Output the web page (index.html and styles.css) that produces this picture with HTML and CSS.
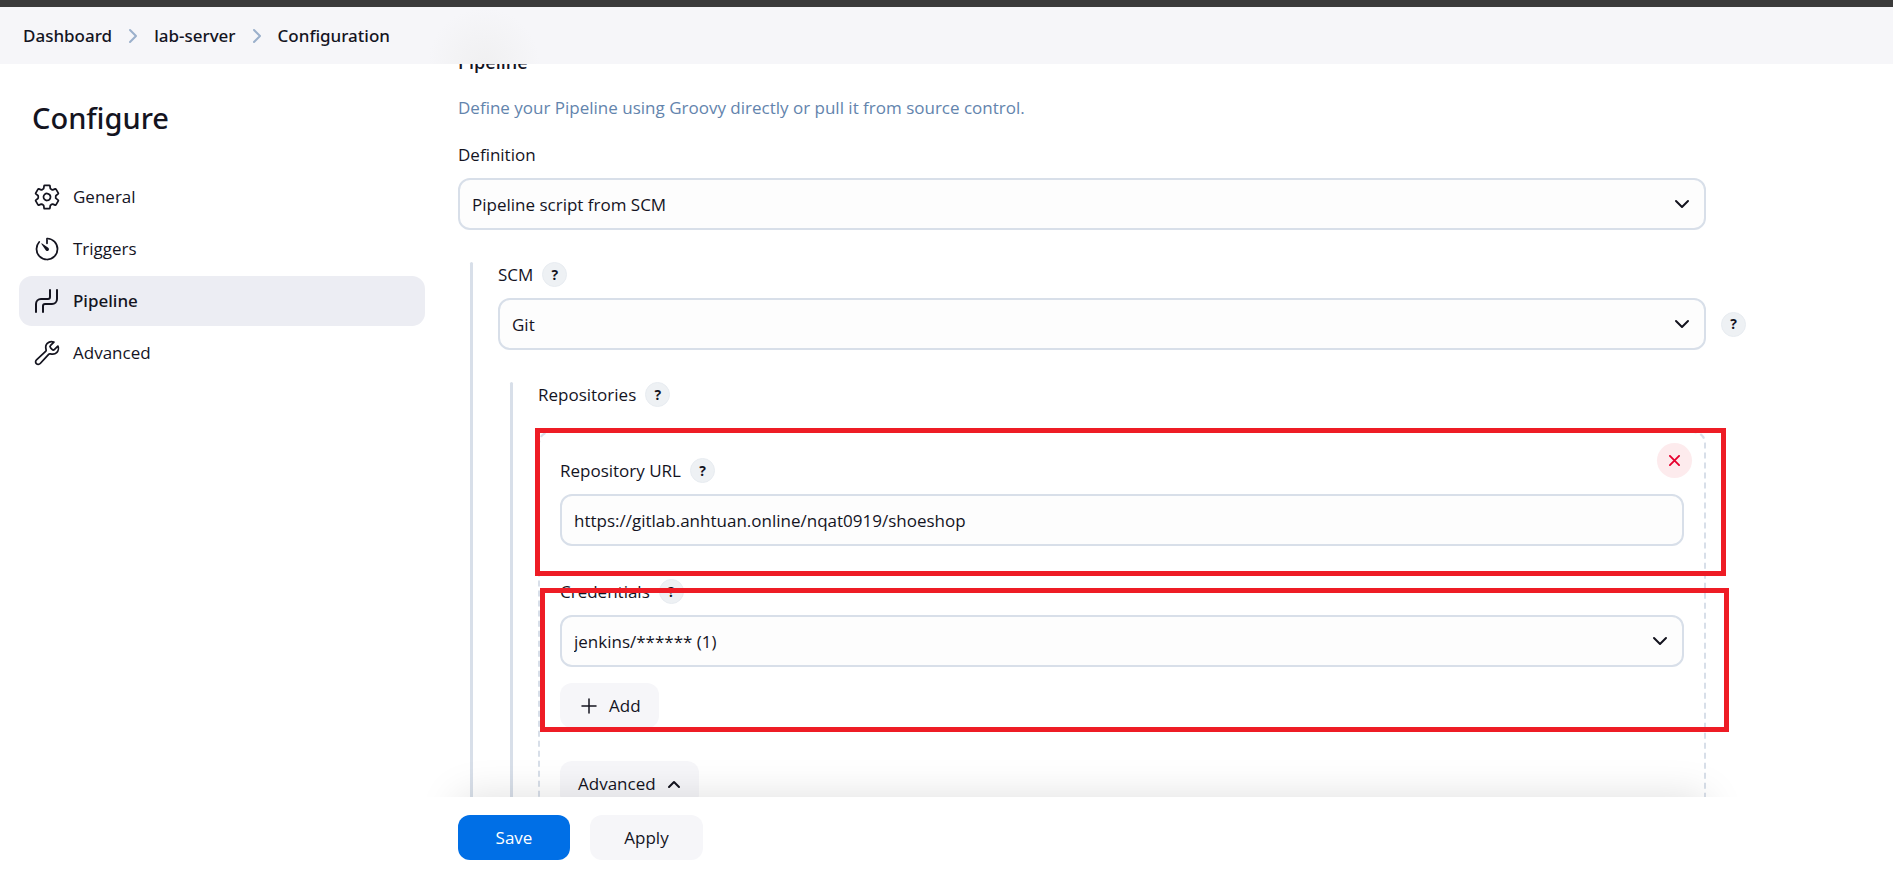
FILE: index.html
```html
<!DOCTYPE html>
<html lang="en">
<head>
<meta charset="utf-8">
<meta name="viewport" content="width=device-width, initial-scale=1">
<title>lab-server Configuration</title>
<link rel="stylesheet" href="styles.css">
</head>
<body>
<div class="app">
  <header class="header">
    <nav class="breadcrumbs" aria-label="Breadcrumb">
      <a href="#">Dashboard</a>
      <svg class="crumb-sep" viewBox="0 0 10 16" aria-hidden="true"><path d="M2 2l6 6-6 6"/></svg>
      <a href="#">lab-server</a>
      <svg class="crumb-sep" viewBox="0 0 10 16" aria-hidden="true"><path d="M2 2l6 6-6 6"/></svg>
      <a href="#">Configuration</a>
    </nav>
  </header>
  <div class="page">
    <aside class="sidebar">
      <h1 class="title">Configure</h1>
      <nav class="tasks" aria-label="Sections">
        <a class="task" href="#general">
          <svg class="task-icon" viewBox="0 0 512 512" aria-hidden="true"><path d="M262.29 192.31a64 64 0 1057.4 57.4 64.13 64.13 0 00-57.4-57.4zM416.39 256a154.34 154.34 0 01-1.53 20.79l45.21 35.46a10.81 10.81 0 012.45 13.75l-42.77 74a10.81 10.81 0 01-13.14 4.59l-44.9-18.08a16.11 16.11 0 00-15.17 1.75A164.48 164.48 0 01325 400.8a15.94 15.94 0 00-8.82 12.14l-6.73 47.89a11.08 11.08 0 01-10.68 9.17h-85.54a11.11 11.11 0 01-10.69-8.87l-6.72-47.82a16.07 16.07 0 00-9-12.22 155.3 155.3 0 01-21.46-12.57 16 16 0 00-15.11-1.71l-44.89 18.07a10.81 10.81 0 01-13.14-4.58l-42.77-74a10.8 10.8 0 012.45-13.75l38.21-30a16.05 16.05 0 006-14.08c-.36-4.17-.58-8.33-.58-12.5s.21-8.27.58-12.35a16 16 0 00-6.07-13.94l-38.19-30A10.81 10.81 0 0149.48 186l42.77-74a10.81 10.81 0 0113.14-4.59l44.9 18.08a16.11 16.11 0 0015.17-1.75A164.48 164.48 0 01187 111.2a15.94 15.94 0 008.82-12.14l6.73-47.89A11.08 11.08 0 01213.23 42h85.54a11.11 11.11 0 0110.69 8.87l6.72 47.82a16.07 16.07 0 009 12.22 155.3 155.3 0 0121.46 12.57 16 16 0 0015.11 1.71l44.89-18.07a10.81 10.81 0 0113.14 4.58l42.77 74a10.8 10.8 0 01-2.45 13.75l-38.21 30a16.05 16.05 0 00-6.05 14.08c.33 4.14.55 8.3.55 12.47z"/></svg>
          General
        </a>
        <a class="task" href="#triggers">
          <svg class="task-icon" viewBox="0 0 512 512" aria-hidden="true"><path d="M112.91 128A191.85 191.85 0 0064 254c-1.18 106.35 85.65 193.8 192 194 106.2.2 192-85.83 192-192 0-104.54-83.55-189.61-187.5-192a4.36 4.36 0 00-4.5 4.37V152"/><path class="solid" d="M233.38 278.63l-79-113a8.13 8.13 0 0111.32-11.32l113 79a32.5 32.5 0 01-37.25 53.26 33.21 33.21 0 01-8.07-7.94z"/></svg>
          Triggers
        </a>
        <a class="task task-active" href="#pipeline" aria-current="true">
          <svg class="task-icon task-icon-pipe" viewBox="0 0 28 28" aria-hidden="true"><path d="M3 25v-8a5 5 0 0 1 5-5h7a2 2 0 0 0 2-2V3M10 25v-6a2 2 0 0 1 2-2h7a5 5 0 0 0 5-5V3"/></svg>
          Pipeline
        </a>
        <a class="task" href="#advanced">
          <svg class="task-icon" viewBox="0 0 512 512" aria-hidden="true"><path d="M393.87 190a32.1 32.1 0 01-45.25 0l-26.57-26.57a32.09 32.09 0 010-45.26L382.19 58a1 1 0 00-.3-1.64c-38.82-16.64-89.15-8.16-121.11 23.57-30.58 30.35-32.32 76-21.12 115.84a31.93 31.93 0 01-9.06 32.08L64 380a48.17 48.17 0 1068 68l153.86-167a31.93 31.93 0 0131.6-9.13c39.54 10.59 84.54 8.6 114.72-21.19 32.49-32 39.5-88.56 23.75-120.93a1 1 0 00-1.6-.26z"/></svg>
          Advanced
        </a>
      </nav>
    </aside>
    <main class="main">
      <form class="form">
        <div class="scroll">
          <h2 class="section-title">Pipeline</h2>
          <p class="section-description">Define your Pipeline using Groovy directly or pull it from source control.</p>
          <div class="label-row"><label for="definition">Definition</label></div>
          <div class="select">
            <select id="definition"><option>Pipeline script from SCM</option></select>
            <svg class="chevron" viewBox="0 0 16 10" aria-hidden="true"><path d="M2 2l6 6 6-6"/></svg>
          </div>
          <div class="nested">
            <div class="label-row"><label for="scm">SCM</label><button class="help" type="button" aria-label="Help for SCM">?</button></div>
            <div class="select-with-help">
              <div class="select">
                <select id="scm"><option>Git</option></select>
                <svg class="chevron" viewBox="0 0 16 10" aria-hidden="true"><path d="M2 2l6 6 6-6"/></svg>
              </div>
              <button class="help" type="button" aria-label="Help for Git">?</button>
            </div>
            <div class="nested">
              <div class="label-row"><span>Repositories</span><button class="help" type="button" aria-label="Help for Repositories">?</button></div>
              <div class="repository">
                <button class="delete" type="button" aria-label="Delete repository"><svg viewBox="0 0 12 12" aria-hidden="true"><path d="M1 1l10 10M11 1L1 11"/></svg></button>
                <div class="label-row"><label for="url">Repository URL</label><button class="help" type="button" aria-label="Help for Repository URL">?</button></div>
                <input class="textbox" id="url" type="text" value="https://gitlab.anhtuan.online/nqat0919/shoeshop">
                <div class="label-row credentials"><label for="cred">Credentials</label><button class="help" type="button" aria-label="Help for Credentials">?</button></div>
                <div class="select">
                  <select id="cred"><option>jenkins/****** (1)</option></select>
                  <svg class="chevron" viewBox="0 0 16 10" aria-hidden="true"><path d="M2 2l6 6 6-6"/></svg>
                </div>
                <button class="button add" type="button"><svg class="plus" viewBox="0 0 16 16" aria-hidden="true"><path d="M8 1v14M1 8h14"/></svg>Add</button>
                <button class="button advanced" type="button">Advanced<svg class="caret" viewBox="0 0 14 10" aria-hidden="true"><path d="M2 8l5-5 5 5"/></svg></button>
                <div class="mark mark-url"></div>
                <div class="mark mark-credentials"></div>
              </div>
            </div>
          </div>
        </div>
        <div class="actions">
          <button class="button save" type="button">Save</button>
          <button class="button apply" type="button">Apply</button>
        </div>
      </form>
    </main>
  </div>
</div>
</body>
</html>
```
FILE: styles.css
```css
* { box-sizing: border-box; }

:root {
  --text: #14141f;
  --line: #d8dfe9;
  --soft: #f6f6f9;
  --mark: #ee1c25;
  --medium-font: "Noto Sans", "Open Sans", sans-serif;
}

body {
  margin: 0;
  background: #fff;
  color: var(--text);
  font: 17px/24px "Open Sans", "Noto Sans", sans-serif;
}

button, input, select { color: inherit; font: inherit; }

svg { fill: none; stroke: currentColor; stroke-linecap: round; stroke-linejoin: round; }

.app { display: flex; flex-direction: column; height: 100vh; overflow: hidden; }

.header {
  flex: none;
  border-top: 7px solid #3b3b3b;
  background: radial-gradient(circle at 484px 57px, #f0f0f1, #f6f6f9 56px);
}

.breadcrumbs { display: flex; align-items: center; height: 57px; padding: 0 23px; font-family: var(--medium-font); font-weight: 500; }
.breadcrumbs a { color: inherit; text-decoration: none; }
.crumb-sep { width: 10px; height: 16px; margin: 0 16px; color: #9bb0cb; stroke-width: 2; }

.page { display: flex; flex: 1; min-height: 0; }

.sidebar { flex: none; width: 425px; padding: 34px 0 0 19px; }
.title { margin: 0 0 34px; padding-left: 13px; font-family: var(--medium-font); font-size: 29px; line-height: 40px; font-weight: 500; }
.tasks { display: flex; flex-direction: column; gap: 2px; }
.task {
  display: flex;
  align-items: center;
  gap: 12px;
  height: 50px;
  padding: 0 14px;
  border-radius: 13px;
  color: inherit;
  text-decoration: none;
}
.task-active { background: #ecedf3; font-family: var(--medium-font); font-weight: 500; }
.task-icon { width: 28px; height: 28px; stroke-width: 32; }
.task-icon-pipe { stroke-width: 2; }
.task-icon .solid { fill: currentColor; stroke: none; }

.main { flex: 1; min-width: 0; }
.form { display: flex; flex-direction: column; height: 100%; }
.scroll { flex: 1; min-height: 0; overflow: hidden; padding: 0 187px 0 33px; }

.section-title { margin: -14px 0 22px; font-size: 18px; line-height: 24px; font-weight: 600; }
.section-description { margin: 0 0 22px; color: #6384ad; }

.label-row { display: flex; align-items: center; gap: 9px; height: 25px; margin-bottom: 11px; }
.help {
  flex: none;
  width: 25px;
  height: 25px;
  padding: 0;
  border: 1px solid #e8ecf1;
  border-radius: 50%;
  background: #eef1f4;
  font-size: 14px;
  line-height: 20px;
  font-weight: 700;
}

.select { display: grid; flex: 1; align-items: center; }
.select select, .textbox {
  width: 100%;
  height: 52px;
  padding: 1px 12px 0;
  border: 2px solid var(--line);
  border-radius: 12px;
  background: #fdfdfd;
}
.select select { grid-area: 1 / 1; appearance: none; }
.chevron { grid-area: 1 / 1; justify-self: end; width: 16px; height: 10px; margin-right: 16px; stroke-width: 2; pointer-events: none; }
.select-with-help { display: flex; align-items: center; gap: 15px; margin-right: -40px; }
.textbox { display: block; }

.nested { position: relative; margin-top: 32px; padding-left: 40px; }
.nested::before {
  content: "";
  position: absolute;
  top: 0;
  bottom: 0;
  left: 12px;
  width: 3px;
  border-radius: 3px;
  background: var(--line);
}

.repository {
  position: relative;
  margin-top: 24px;
  padding: 25px 20px 60px;
  border: 2px dashed var(--line);
  border-radius: 12px;
}
.credentials { margin-top: 33px; }

.delete {
  position: absolute;
  top: 10px;
  right: 12px;
  display: grid;
  place-items: center;
  width: 35px;
  height: 35px;
  padding: 0;
  border: 0;
  border-radius: 50%;
  background: #fdebed;
  color: #e6002e;
}
.delete svg { width: 11px; height: 11px; stroke-width: 2; }

.button {
  display: flex;
  align-items: center;
  justify-content: center;
  height: 45px;
  padding: 0 18px;
  border: 0;
  border-radius: 12px;
  background: var(--soft);
}
.add { gap: 12px; margin-top: 16px; padding: 0 18px 0 21px; }
.plus { width: 16px; height: 16px; stroke-width: 1.5; }
.advanced { gap: 11px; margin-top: 33px; }
.caret { width: 14px; height: 10px; stroke-width: 2; }

.actions { position: relative; display: flex; flex: none; gap: 20px; margin: 0 187px 0 33px; padding: 18px 0 15px; }
.actions::before {
  content: "";
  position: absolute;
  inset: 0;
  box-shadow: 0 0 40px rgba(0, 0, 0, 0.13);
  clip-path: inset(-40px -40px 100% -40px);
  pointer-events: none;
}
.save { width: 112px; background: #006fe6; color: #fff; }
.apply { width: 113px; }

.mark { position: absolute; border: 5px solid var(--mark); pointer-events: none; }
.mark-url { top: -5px; left: -5px; right: -22px; height: 148px; }
.mark-credentials { top: 155px; left: 0; right: -25px; height: 144px; }
```
